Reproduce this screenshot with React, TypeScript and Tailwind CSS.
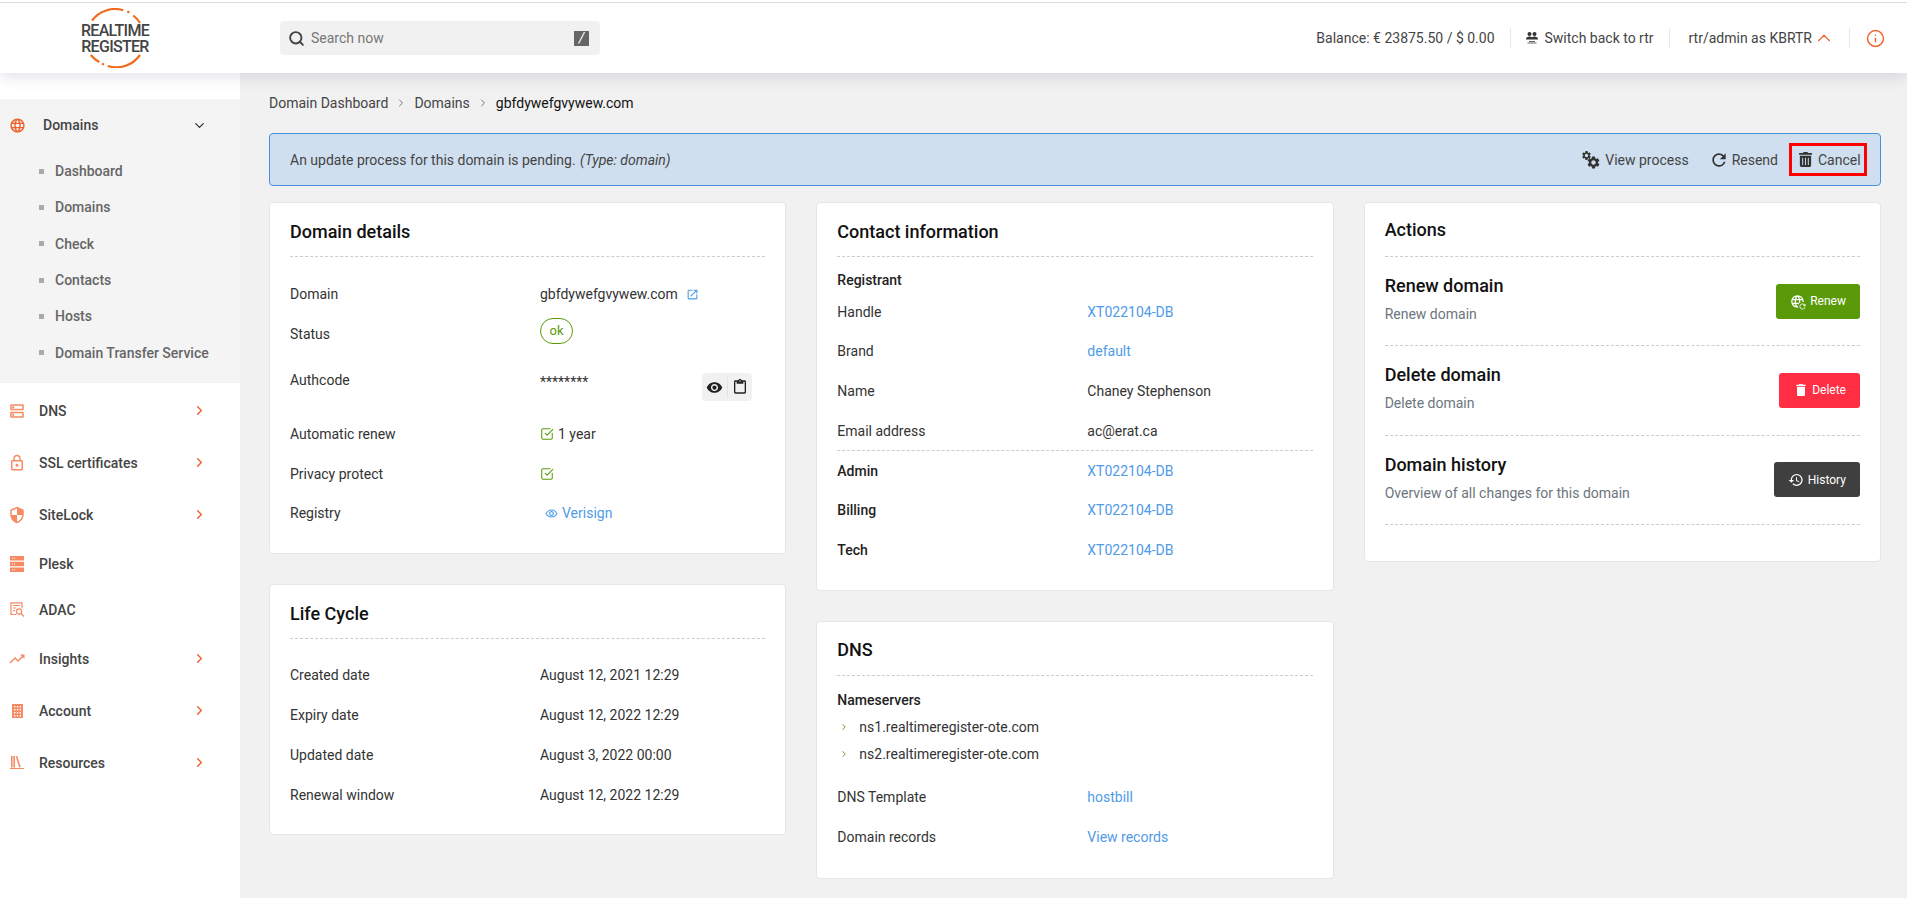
import type { ReactNode } from "react";
import { ChevronDown, ChevronRight, ChevronUp, Info, Search, SquareCheckBig } from "lucide-react";
import { FaTrashAlt } from "react-icons/fa";
import {
  MdDelete,
  MdLanguage,
  MdLockOutline,
  MdOpenInNew,
  MdOutlineContentPaste,
  MdOutlineDns,
  MdOutlineRemoveRedEye,
  MdRefresh,
  MdRestore,
  MdSecurity,
  MdSettings,
  MdTrendingUp,
  MdVisibility,
} from "react-icons/md";

const subItems = ["Dashboard", "Domains", "Check", "Contacts", "Hosts", "Domain Transfer Service"];

function PleskIcon() {
  return (
    <svg width="14" height="16" viewBox="0 0 14 16" fill="currentColor">
      <path fillRule="evenodd" d="M0 0h14v4.5H0zM2 1.7h1v1H2zM4 1.7h1v1H4z" />
      <path fillRule="evenodd" d="M0 5.7h14v4.6H0zM2 7.5h1v1H2zM4 7.5h1v1H4z" />
      <path fillRule="evenodd" d="M0 11.5h14V16H0zM2 13.2h1v1H2zM4 13.2h1v1H4z" />
    </svg>
  );
}

function AdacIcon() {
  return (
    <svg width="15" height="15" viewBox="0 0 15 15" fill="none" stroke="currentColor" strokeWidth="1.2">
      <path d="M6 12.5H1V.8h11v5.5" />
      <path d="M3 3.5h7M3 6h3M3 8.5h2" />
      <circle cx="9" cy="9.5" r="2.6" />
      <path d="M11 11.5l3 3" />
    </svg>
  );
}

function AccountIcon() {
  return (
    <svg width="11" height="14" viewBox="0 0 11 14" fill="currentColor">
      <path
        fillRule="evenodd"
        d="M0 0h11v14H0zM2 2v1.4h1.4V2zM4.8 2v1.4h1.4V2zM7.6 2v1.4H9V2zM2 5v1.4h1.4V5zM4.8 5v1.4h1.4V5zM7.6 5v1.4H9V5zM2 8v1.4h1.4V8zM4.8 8v1.4h1.4V8zM7.6 8v1.4H9V8zM2 11v1.4h1.4V11zM4.8 11v1.4h1.4V11zM7.6 11v1.4H9V11z"
      />
    </svg>
  );
}

function ResourcesIcon() {
  return (
    <svg width="14" height="13" viewBox="0 0 14 13" fill="currentColor">
      <path d="M1 0h1.6v11.5H1zM3.4 0H5v11.5H3.4zM5.8 .6l1.5-.5 3.4 11-1.5.5z" />
      <path d="M0 12h14v1H0z" />
    </svg>
  );
}

function SwitchIcon() {
  return (
    <svg width="12" height="12" viewBox="0 0 12 12" fill="currentColor" className="mr-[7px] text-[#333]">
      <circle cx="3.5" cy="2.1" r="2" />
      <circle cx="8.5" cy="2.1" r="2" />
      <path d="M0 7.6C0 5.4 1.6 4.6 3.5 4.6c1 0 1.9.2 2.5.7.6-.5 1.5-.7 2.5-.7 1.9 0 3.5.8 3.5 3z" />
      <path d="M3 9h6v.9H3zM1.5 10.6h9v.9h-9z" opacity="0.75" />
    </svg>
  );
}

function ProcessIcon() {
  return (
    <span className="relative h-[18px] w-[18px]">
      <MdSettings size={11} className="absolute -left-[1px] -top-[1px] text-[#333]" />
      <MdSettings size={15} className="absolute -bottom-[1px] -right-[1px] text-[#333]" />
    </span>
  );
}

const navItems = [
  { label: "DNS", icon: <MdOutlineDns size={18} />, arrow: true },
  { label: "SSL certificates", icon: <MdLockOutline size={18} />, arrow: true },
  { label: "SiteLock", icon: <MdSecurity size={18} />, arrow: true },
  { label: "Plesk", icon: <PleskIcon />, arrow: false },
  { label: "ADAC", icon: <AdacIcon />, arrow: false },
  { label: "Insights", icon: <MdTrendingUp size={18} />, arrow: true },
  { label: "Account", icon: <AccountIcon />, arrow: true },
  { label: "Resources", icon: <ResourcesIcon />, arrow: true },
];

function Logo() {
  return (
    <div className="relative flex h-[60px] w-[80px] items-center justify-center pt-[1px] text-center text-[16px] leading-[15.5px] font-medium tracking-[-0.7px] text-[#444]">
      <svg viewBox="0 0 80 60" className="absolute inset-0 h-full w-full" fill="none" stroke="#f26a1b" strokeWidth="2.2">
        <path d="M17 12.5 A 29 29 0 0 1 48.3 2.2" />
        <path d="M52.3 3.6 L54.3 4.6" />
        <path d="M58.3 7.5 A 29 29 0 0 1 65 15" />
        <path d="M15.7 47 A 29 29 0 0 0 24.3 54" />
        <path d="M27 55.7 L29 56.5" />
        <path d="M32.7 58 A 29 29 0 0 0 65 47" />
      </svg>
      <span>
        REALTIME
        <br />
        REGISTER
      </span>
    </div>
  );
}

function Header() {
  return (
    <header className="relative z-10 shrink-0 bg-white shadow-[0_4px_14px_rgba(60,60,90,0.14)]">
      <div className="h-[2px] bg-white" />
      <div className="h-px bg-[#dcdcdc]" />
      <div className="flex h-[70px] items-center">
        <div className="flex w-[280px] justify-center pr-[50px]">
          <Logo />
        </div>
        <div className="flex h-[34px] w-[320px] items-center rounded bg-[#f1f1f1] pl-2 pr-[11px] text-sm text-[#777]">
          <Search size={17} strokeWidth={2.7} className="text-[#444]" />
          <span className="ml-[6px] flex-1">Search now</span>
          <span className="flex h-[15px] w-[15px] items-center justify-center bg-[#666] text-sm italic leading-none text-white">/</span>
        </div>
        <div className="ml-auto flex items-center pr-[22px] text-sm text-[#444]">
          <span>Balance: € 23875.50 / $ 0.00</span>
          <span className="mx-[15px] h-5 w-px bg-[#e8e8e8]" />
          <SwitchIcon />
          <span>Switch back to rtr</span>
          <span className="ml-[15px] mr-[19px] h-5 w-px bg-[#e8e8e8]" />
          <span>rtr/admin as KBRTR</span>
          <ChevronUp size={22} strokeWidth={1.2} className="ml-[1px] text-[#f0612a]" />
          <span className="ml-[14px] mr-[16px] h-5 w-px bg-[#e8e8e8]" />
          <Info size={19} strokeWidth={1.8} className="text-[#f0612a]" />
        </div>
      </div>
    </header>
  );
}

function Sidebar() {
  return (
    <aside className="w-[240px] shrink-0 bg-white pt-[26px] font-medium">
      <div className="bg-[#f4f4f4] pb-3">
        <div className="flex h-[54px] items-center pb-[2px] text-sm text-[#444]">
          <MdLanguage size={17} className="ml-[9px] text-[#f0612a]" />
          <span className="ml-[17px] flex-1">Domains</span>
          <ChevronDown size={15} strokeWidth={2} className="mr-[33px] text-[#333]" />
        </div>
        {subItems.map((item) => (
          <div key={item} className="flex h-[36.3px] items-center text-sm text-[#666]">
            <span className="ml-[39px] h-[5px] w-[5px] bg-[#aaa]" />
            <span className="ml-[11px]">{item}</span>
          </div>
        ))}
      </div>
      <div className="mt-0.5">
        {navItems.map((item) => (
          <div key={item.label} className={`flex items-center text-sm text-[#444] ${item.arrow ? "h-[52px]" : "h-[46px]"}`}>
            <span className="ml-[7px] flex w-5 justify-center text-[#f58a63]">{item.icon}</span>
            <span className="ml-3 flex-1">{item.label}</span>
            {item.arrow && <ChevronRight size={15} strokeWidth={2.2} className="mr-[33px] text-[#f0612a]" />}
          </div>
        ))}
      </div>
    </aside>
  );
}

function Card({ title, children, className = "", titleClass = "pt-[4px]" }: { title: string; children: ReactNode; className?: string; titleClass?: string }) {
  return (
    <section className={`rounded border border-[#e6e6e6] bg-white px-[20px] ${className}`}>
      <h2 className={`flex h-[54px] items-center border-b border-dashed border-[#ccc] text-lg font-medium text-[#111] ${titleClass}`}>{title}</h2>
      {children}
    </section>
  );
}

function Row({ label, children, height = "h-10" }: { label: string; children?: ReactNode; height?: string }) {
  return (
    <div className={`grid grid-cols-[250px_1fr] pt-[10px] text-sm leading-5 text-[#333] ${height}`}>
      <span>{label}</span>
      <div className="relative">{children}</div>
    </div>
  );
}

function CheckIcon() {
  return <SquareCheckBig size={14} strokeWidth={1.8} className="text-[#5a9a08]" />;
}

function ActionRow({ title, text, button }: { title: string; text: string; button: ReactNode }) {
  return (
    <div className="flex h-[89.3px] items-center justify-between border-b border-dashed border-[#ccc]">
      <div className="pb-[6px]">
        <h3 className="text-lg leading-[27px] font-medium text-[#111]">{title}</h3>
        <p className="mt-[5px] text-sm leading-5 text-[#6c757d]">{text}</p>
      </div>
      {button}
    </div>
  );
}

function ActionButton({ icon, label, className }: { icon: ReactNode; label: string; className: string }) {
  return (
    <span className={`flex h-[35px] items-center gap-[3.5px] rounded-[3px] px-[14px] text-xs text-white ${className}`}>
      {icon}
      {label}
    </span>
  );
}

function RenewIcon() {
  return (
    <span className="relative mr-[2px]">
      <MdLanguage size={15} />
      <MdRefresh size={9} className="absolute -bottom-[2px] -right-[2px] rounded-full bg-[#5a9a08]" />
    </span>
  );
}

function Link({ children }: { children: ReactNode }) {
  return <span className="text-[#4f9be8]">{children}</span>;
}

export default function App() {
  return (
    <div className="flex h-screen flex-col overflow-hidden bg-[#f1f1f1] [font-family:Roboto,sans-serif]">
      <Header />
      <div className="flex flex-1">
        <Sidebar />
        <main className="min-w-0 flex-1 pl-[29px] pr-[26px] pt-5">
          <nav className="flex items-center text-sm leading-5 text-[#444]">
            <span>Domain Dashboard</span>
            <ChevronRight size={12} className="mx-[7px] text-[#777]" />
            <span>Domains</span>
            <ChevronRight size={12} className="mx-[7px] text-[#777]" />
            <span className="text-[#111]">gbfdywefgvywew.com</span>
          </nav>

          <div className="mt-5 flex h-[53px] items-center rounded border border-[#4a90d9] bg-[#cfdfef] pl-5 pr-[13px] text-sm text-[#444]">
            <span>
              An update process for this domain is pending. <em className="ml-[1px]">(Type: domain)</em>
            </span>
            <div className="ml-auto flex items-center">
              <span className="flex items-center gap-[5px]">
                <ProcessIcon />
                View process
              </span>
              <span className="ml-[20px] flex items-center gap-[3px]">
                <MdRefresh size={20} className="text-[#333]" />
                Resend
              </span>
              <span className="ml-[11px] flex h-[33px] w-[78px] items-center gap-[5px] border-[3px] border-[#f00] pl-[6px]">
                <FaTrashAlt size={15} className="text-[#333]" />
                Cancel
              </span>
            </div>
          </div>

          <div className="mt-4 grid grid-cols-3 items-start gap-x-[30px]">
            <div className="flex flex-col gap-[30px]">
              <Card title="Domain details" className="pb-[20px]">
                <div className="pt-[17px]">
                  <Row label="Domain">
                    <span className="flex items-center gap-[8px]">
                      gbfdywefgvywew.com
                      <MdOpenInNew size={13} className="text-[#4f9be8]" />
                    </span>
                  </Row>
                  <Row label="Status" height="h-[46px]">
                    <span className="mt-[-6px] flex h-[26px] w-[33px] items-center justify-center rounded-full border border-[#5a9a08] text-[13px] text-[#5a9a08]">ok</span>
                  </Row>
                  <Row label="Authcode" height="h-[54px]">
                    <span className="block pt-[2px]">********</span>
                    <span className="absolute right-[13px] top-[3px] flex h-[28px] w-[50px] items-center justify-center gap-[4px] rounded bg-[#f1f1f1] text-[#222]">
                      <MdVisibility size={17} />
                      <span className="h-5 w-px bg-[#e4e4e4]" />
                      <MdOutlineContentPaste size={16} />
                    </span>
                  </Row>
                  <Row label="Automatic renew">
                    <span className="flex items-center gap-[4px]">
                      <CheckIcon />1 year
                    </span>
                  </Row>
                  <Row label="Privacy protect" height="h-[39px]">
                    <span className="flex h-5 items-center"><CheckIcon /></span>
                  </Row>
                  <Row label="Registry">
                    <span className="flex items-center gap-1 pl-[5px] text-[#4f9be8]">
                      <MdOutlineRemoveRedEye size={13} />
                      Verisign
                    </span>
                  </Row>
                </div>
              </Card>

              <Card title="Life Cycle" className="pb-[19px]">
                <div className="pt-4">
                  <Row label="Created date">August 12, 2021 12:29</Row>
                  <Row label="Expiry date">August 12, 2022 12:29</Row>
                  <Row label="Updated date">August 3, 2022 00:00</Row>
                  <Row label="Renewal window">August 12, 2022 12:29</Row>
                </div>
              </Card>
            </div>

            <div className="flex flex-col gap-[30px]">
              <Card title="Contact information" className="pb-[19.5px]">
                <p className="mt-[13px] mb-[1.5px] text-sm leading-5 font-medium text-[#222]">Registrant</p>
                <div className="border-b border-dashed border-[#ccc]">
                  <Row label="Handle" height="h-[39.7px]"><Link>XT022104-DB</Link></Row>
                  <Row label="Brand" height="h-[39.7px]"><Link>default</Link></Row>
                  <Row label="Name" height="h-[39.7px]">Chaney Stephenson</Row>
                  <Row label="Email address" height="h-[39.7px]">ac@erat.ca</Row>
                </div>
                <div className="font-medium">
                  <div className="grid h-[39px] grid-cols-[250px_1fr] items-center text-sm text-[#222]">
                    <span>Admin</span>
                    <span className="font-normal"><Link>XT022104-DB</Link></span>
                  </div>
                  <div className="grid h-10 grid-cols-[250px_1fr] items-center text-sm text-[#222]">
                    <span>Billing</span>
                    <span className="font-normal"><Link>XT022104-DB</Link></span>
                  </div>
                  <div className="grid h-10 grid-cols-[250px_1fr] items-center text-sm text-[#222]">
                    <span>Tech</span>
                    <span className="font-normal"><Link>XT022104-DB</Link></span>
                  </div>
                </div>
              </Card>

              <Card title="DNS" className="pb-[21px]">
                <p className="mt-[14px] text-sm leading-5 font-medium text-[#222]">Nameservers</p>
                <ul className="mt-1 text-sm text-[#333]">
                  {["ns1.realtimeregister-ote.com", "ns2.realtimeregister-ote.com"].map((ns) => (
                    <li key={ns} className="flex h-[26.5px] items-center">
                      <ChevronRight size={10} strokeWidth={2.2} className="ml-[2px] mr-[10px] text-[#5a9a08]" />
                      {ns}
                    </li>
                  ))}
                </ul>
                <div className="mt-[10px]">
                  <Row label="DNS Template"><Link>hostbill</Link></Row>
                  <Row label="Domain records"><Link>View records</Link></Row>
                </div>
              </Card>
            </div>

            <Card title="Actions" titleClass="" className="pb-[36px]">
              <ActionRow
                title="Renew domain"
                text="Renew domain"
                button={<ActionButton className="bg-[#5a9a08]" icon={<RenewIcon />} label="Renew" />}
              />
              <ActionRow
                title="Delete domain"
                text="Delete domain"
                button={<ActionButton className="bg-[#ff2e43]" icon={<MdDelete size={16} />} label="Delete" />}
              />
              <ActionRow
                title="Domain history"
                text="Overview of all changes for this domain"
                button={<ActionButton className="bg-[#3f3f3f]" icon={<MdRestore size={16} />} label="History" />}
              />
            </Card>
          </div>
        </main>
      </div>
    </div>
  );
}
